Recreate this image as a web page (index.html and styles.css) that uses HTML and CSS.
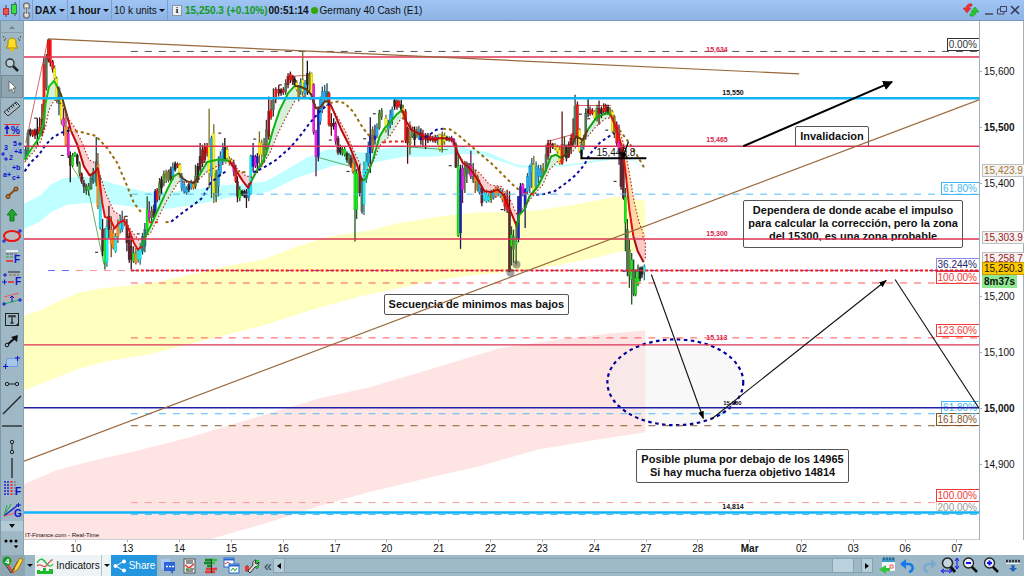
FILE: index.html
```html
<!DOCTYPE html>
<html lang="es">
<head>
    <meta charset="UTF-8">
    <meta name="viewport" content="width=device-width, initial-scale=1.0">
    <title>DAX - 1 hour</title>
    <link rel="stylesheet" href="styles.css">
</head>
<body>
    <header class="topbar">
        <button class="top-icon" aria-label="Chart style">
            <svg width="16" height="16" viewBox="0 0 16 16"><path d="M4 3v12M13 0v14" stroke="#444"/><rect x="1.500" y="6.500" width="5" height="6" fill="#f05050" stroke="#b33"/><rect x="9.500" y="2.500" width="5" height="9" fill="#3ddc3d" stroke="#285"/></svg>
        </button>
        <button class="top-icon link" aria-label="Link chart">
            <svg width="9" height="17" viewBox="0 0 9 17" fill="none" stroke="#777" stroke-width="1.500"><circle cx="4.500" cy="4" r="3" fill="#ddd"/><circle cx="4.500" cy="13" r="3" fill="#ddd"/><path d="M4.500 4v9" stroke="#eee" stroke-width="2.500"/><path d="M4.500 5v7"/></svg>
        </button>
        <label class="drop"><select class="strong" aria-label="Symbol"><option>DAX</option></select></label>
        <label class="drop"><select class="strong" aria-label="Timeframe"><option>1 hour</option></select></label>
        <label class="drop"><select aria-label="Units"><option>10 k units</option></select></label>
        <button class="info" aria-label="Information">i</button>
        <span class="quote">15,250.3 (+0.10%)</span>
        <span class="strong">00:51:14</span>
        <span class="dot"></span>
        <span class="market">Germany 40 Cash (E1)</span>
        <div class="window-buttons">
            <button aria-label="Refresh"><svg width="16" height="16" viewBox="0 0 16 16"><path d="M9 2C5 1 3 4 3 6H0l4 5 4-5H6c0-1 1-2 3-2z" fill="#e33" stroke="#b22" stroke-width=".5"/><path d="M7 14c4 1 6-2 6-4h3l-4-5-4 5h2c0 1-1 2-3 2z" fill="#2c2" stroke="#181" stroke-width=".5"/></svg></button>
            <button aria-label="Minimize"><svg width="10" height="12" viewBox="0 0 10 12"><path d="M1 10h8" stroke="#446" stroke-width="1.500"/></svg></button>
            <button aria-label="Restore"><svg width="10" height="12" viewBox="0 0 10 12" fill="none" stroke="#446"><rect x="3.500" y="2.500" width="6" height="5"/><path d="M3 5H.5v5H7V8"/></svg></button>
            <button aria-label="Close"><svg width="10" height="12" viewBox="0 0 10 12"><path d="M1 2l8 8M9 2l-8 8" stroke="#335" stroke-width="1.500"/></svg></button>
        </div>
    </header>

    <main class="workspace">
        <nav class="tools" aria-label="Drawing tools">
            <button class="scroll-up" aria-label="Scroll up"><svg width="6" height="4" viewBox="0 0 6 4"><path d="M0 4l3-3 3 3z" fill="#6d858f"/></svg></button>
            <button aria-label="Alert"><svg width="18" height="18" viewBox="0 0 18 18"><path d="M3 13c2-1 2-3 2-6 0-2 2-4 4-4s4 2 4 4c0 3 0 5 2 6z" fill="#ffdc28" stroke="#a80"/><circle cx="9" cy="14.500" r="2" fill="#f5b800"/><path d="M3 3L1 6M1 1L0 3M15 3l2 3M17 1l1 2" stroke="#555" fill="none"/></svg></button>
            <button aria-label="Zoom"><svg width="16" height="16" viewBox="0 0 16 16"><path d="M8 8l6 6" stroke="#222" stroke-width="2.500"/><circle cx="6" cy="6" r="4" fill="#b9ced9" stroke="#333" stroke-width="1.300"/></svg></button>
            <button class="active" aria-label="Pointer"><svg width="16" height="16" viewBox="0 0 16 16"><path d="M5 2v10l2.500-2 2 4 1.500-1-2-4h3z" fill="#fff" stroke="#555" stroke-width=".8"/></svg></button>
            <button aria-label="Ruler"><svg width="18" height="18" viewBox="0 0 18 18"><path d="M1 12L13 2l4 4L5 16z" fill="#a9bdc6" stroke="#333"/><path d="M4 10l2 2M6 8l1 2M8 6l2 2M10 4.500l1 2M12 3l2 2" stroke="#333"/></svg></button>
            <button aria-label="Percent change"><svg width="18" height="14" viewBox="0 0 18 14"><path d="M1 1.500h16M1 12.500h16" stroke="#e33"/><path d="M4 11V4M2 6l2-3 2 3" stroke="#11c" stroke-width="1.500" fill="none"/><text class="glyph" x="8" y="11">%</text></svg></button>
            <button aria-label="Elliott impulse"><svg width="22" height="20" viewBox="0 0 22 20"><path d="M2 18L5 7l4 7 6-11 3 6" stroke="#79a7ec" fill="none"/><path d="M0 13h4M2 11v4M17 3h4M19 1v4M3 18h4M5 16v4" stroke="#11c"/><text class="glyph small" x="3" y="9">3</text><text class="glyph small" x="12" y="5">5</text><text class="glyph small" x="8" y="19">2</text><text class="glyph small" x="13" y="13">+4</text></svg></button>
            <button aria-label="Elliott correction"><svg width="20" height="18" viewBox="0 0 20 18"><path d="M2 2l5 12 5-10 5 11" stroke="#79a7ec" fill="none"/><text class="glyph small" x="10" y="7">+b</text><text class="glyph small" x="1" y="14">a+</text><text class="glyph small" x="10" y="17">c+</text></svg></button>
            <button aria-label="Segment"><svg width="16" height="16" viewBox="0 0 16 16"><path d="M4 11l8-7" stroke="#8a4b14" stroke-width="2"/><circle cx="4" cy="11.500" r="2" fill="#c87a35" stroke="#613208"/><circle cx="12" cy="4" r="2" fill="#c87a35" stroke="#613208"/></svg></button>
            <button aria-label="Up marker"><svg width="14" height="16" viewBox="0 0 14 16"><path d="M7 2l5 6H9v6H5V8H2z" fill="#20a62a" stroke="#137a1c"/></svg></button>
            <button aria-label="Ellipse"><svg width="20" height="16" viewBox="0 0 20 16"><ellipse cx="10" cy="8" rx="8" ry="5" fill="#bbb" stroke="#e11" stroke-width="2"/><path d="M0 13h4M2 11v4M16 3h4M18 1v4" stroke="#11c"/></svg></button>
            <button aria-label="Fibonacci retracement"><svg width="18" height="16" viewBox="0 0 18 16"><path d="M3 2h12" stroke="#eee" stroke-width="2"/><path d="M3 5h12" stroke="#555" stroke-dasharray="3 1"/><path d="M3 8h9" stroke="#393" stroke-dasharray="3 1"/><path d="M3 12h7" stroke="#e22" stroke-width="1.500"/><text class="glyph" x="11" y="14">F</text></svg></button>
            <button aria-label="Fibonacci extension"><svg width="20" height="16" viewBox="0 0 20 16"><path d="M6 2h12" stroke="#555" stroke-width="1.500"/><path d="M7 5h10" stroke="#a63" stroke-dasharray="3 1"/><path d="M6 12h6" stroke="#e22" stroke-width="1.500"/><path d="M0 12h5M2.500 9.500v5M3 3v4M1 5h4" stroke="#11c"/><text class="glyph" x="13" y="15">F</text></svg></button>
            <button aria-label="Channel"><svg width="20" height="16" viewBox="0 0 20 16"><path d="M2 6l15-4" stroke="#e55"/><path d="M2 9l15-4" stroke="#e97"/><path d="M2 13l15-4" stroke="#2a5"/><path d="M0 13h4M2 11v4M16 9h4M18 7v4M10 5v6M8 7l2-2 2 2" stroke="#11c" fill="none"/></svg></button>
            <button aria-label="Text"><svg width="16" height="16" viewBox="0 0 16 16"><rect x="1.500" y="1.500" width="13" height="12" fill="none" stroke="#222"/><path d="M5 5.500V4h6v1.500M8 4v7M6.500 11h3" stroke="#222" stroke-width="1.300" fill="none"/><path d="M11 14l4-4v4z" fill="#222"/></svg></button>
            <button aria-label="Arrow"><svg width="16" height="16" viewBox="0 0 16 16"><path d="M3 12l8-7" stroke="#111" stroke-width="2"/><path d="M14 2l-1 7-6-5z" fill="#111"/><circle cx="3" cy="12" r="1.800" fill="#9db7c4" stroke="#111"/></svg></button>
            <button aria-label="Rectangle"><svg width="18" height="14" viewBox="0 0 18 14"><rect x="3.500" y="3.500" width="11" height="8" fill="#a7c5e5" stroke="#6b9bf0"/><path d="M0 11.500h5M2.500 9v5M12 3h5M14.500 1v5" stroke="#11c"/></svg></button>
            <button aria-label="Horizontal segment"><svg width="16" height="8" viewBox="0 0 16 8" fill="none" stroke="#222"><path d="M4 4h8"/><circle cx="3" cy="4" r="1.700"/><circle cx="13" cy="4" r="1.700"/></svg></button>
            <button aria-label="Trend line"><svg width="20" height="20" viewBox="0 0 20 20"><path d="M1 19L19 1" stroke="#222" stroke-width="1.300"/></svg></button>
            <button aria-label="Horizontal line"><svg width="20" height="4" viewBox="0 0 20 4"><path d="M0 2h20" stroke="#222" stroke-width="1.300"/></svg></button>
            <button aria-label="Vertical segment"><svg width="8" height="16" viewBox="0 0 8 16" fill="none" stroke="#222"><path d="M4 4v8"/><circle cx="4" cy="3" r="1.700"/><circle cx="4" cy="13" r="1.700"/></svg></button>
            <button aria-label="Vertical line"><svg width="4" height="20" viewBox="0 0 4 20"><path d="M2 0v20" stroke="#222" stroke-width="1.300"/></svg></button>
            <button aria-label="Fibonacci time"><svg width="20" height="18" viewBox="0 0 20 18"><path d="M3 1v15M6 1v15" stroke="#4549c9" stroke-width="2" stroke-dasharray="2 1"/><path d="M9.500 1v15" stroke="#e33" stroke-width="2" stroke-dasharray="2 1"/><path d="M13 1v15" stroke="#667" stroke-dasharray="2 1"/><text class="glyph" x="13" y="15">F</text></svg></button>
            <button aria-label="Gann fan"><svg width="20" height="16" viewBox="0 0 20 16"><path d="M2 14L5 3M2 14L9 2" stroke="#2a4"/><path d="M2 14L16 3" stroke="#22c" stroke-width="1.500"/><path d="M2 14l12-3" stroke="#e55"/><path d="M14 3h5M16.500 1v4" stroke="#11c"/><text class="glyph" x="12" y="15">G</text></svg></button>
            <button class="scroll-down" aria-label="Scroll down"><svg width="6" height="4" viewBox="0 0 6 4"><path d="M0 0h6L3 4z" fill="#111"/></svg></button>
            <button class="more" aria-label="More tools"><svg width="18" height="14" viewBox="0 0 18 14"><circle cx="3" cy="5" r="1.500"/><circle cx="8" cy="5" r="1.500"/><circle cx="13" cy="5" r="1.500"/><path d="M10 9h6l-3 4z" stroke="#fff" stroke-width=".5"/></svg></button>
        </nav>

        <section class="chart">
            <div class="plot">
                <p class="note secuencia">Secuencia de minimos mas bajos</p>
                <p class="note invalidacion">Invalidacion</p>
                <p class="note dependera"><span>Dependera de donde acabe el impulso<br>para calcular la corrección, pero la zona<br>del 15300, es una zona probable</span></p>
                <p class="note posible">Posible pluma por debajo de los 14965<br>Si hay mucha fuerza objetivo 14814</p>

                <span class="fib fib-0">0.00%</span>
                <span class="fib fib-618 sky">61.80%</span>
                <span class="fib fib-100 red">100.00%</span>
                <span class="fib fib-382 blue">36.244%</span>
                <span class="fib fib-1236 red">123.60%</span>
                <span class="fib fib-618b sky">61.80%</span>
                <span class="fib fib-1618 brown">161.80%</span>
                <span class="fib fib-200 grey">200.00%</span>
                <span class="fib fib-100b red">100.00%</span>

                <svg class="drawing" viewBox="24 21 956 519" preserveAspectRatio="none">
                    <defs>
                        <marker id="head" viewBox="0 0 8 8" refX="7" refY="4" markerWidth="8" markerHeight="8" markerUnits="userSpaceOnUse" orient="auto"><path d="M0 1l8 3-8 3z"/></marker>
                        <marker id="bighead" viewBox="0 0 10 10" refX="9" refY="5" markerWidth="10" markerHeight="10" markerUnits="userSpaceOnUse" orient="auto"><path d="M0 0l10 5-10 5z"/></marker>
                    </defs>

                    <path fill="#ffffbf" d="M24 316L40 311 58 302 77 294 100 289 130 286 160 282 200 273 230 266 263 260 297 247 330 237 370 231 397 224 440 217 473 213 517 212 543 210 580 204 617 197 646 201V253L620 252 597 258 563 265 517 272 470 276 430 282 360 297 310 311 260 327 200 342 150 355 107 362 77 370 45 383 24 391z"/>
                    <path fill="#ffe4e4" d="M24 485L57 471 90 462 135 452 190 438 230 426 270 414 320 399 370 388 424 372 500 349 560 340 610 334 646 331V433L600 440 540 450 480 467 424 480 370 493 320 507 270 523 211 540H24z"/>
                    <g id="series"></g>

                    <ellipse cx="676" cy="383" rx="68" ry="43" fill="#eee" fill-opacity=".4" stroke="#000099" stroke-width="2.200" stroke-dasharray="3.500 3.500"/>

                    <g class="level crimson">
                        <path d="M24 57H980M24 146.500H980M24 239.500H980M24 345.500H980"/>
                    </g>
                    <path class="level navy" d="M24 408.500H980"/>
                    <path class="level cyan" d="M24 98.500H980M24 513.500H980"/>
                    <g class="level dashed">
                        <path stroke="#555" d="M131 51.500H980"/>
                        <path stroke="#4dbdf5" d="M131 194.500H980M131 414.500H980M131 515.500H980"/>
                        <path stroke="#f55" d="M131 283.500H980M131 338.500H980"/>
                        <path stroke="#f99" d="M131 503.500H938"/>
                        <path stroke="#8b5a2b" d="M131 426.500H980"/>
                        <path stroke="#66f" d="M48 271H980"/>
                    </g>
                    <path stroke="#f99" stroke-dasharray="7 7" d="M76 271H131"/>
                    <path stroke="#f01818" stroke-width="1.800" stroke-dasharray="3 2" d="M131 271H980"/>

                    <g stroke="#99683a" stroke-width="1.200">
                        <path d="M48 39L800 74M24 462L980 100"/>
                    </g>
                    <g stroke="#111" stroke-width="1.100" fill="none">
                        <path marker-end="url(#head)" d="M652 275L704 419"/>
                        <path marker-end="url(#head)" d="M712 420L887 281"/>
                        <path d="M896 280L980 409"/>
                    </g>
                    <path marker-end="url(#bighead)" stroke="#000" stroke-width="2" d="M744 146.500L893 82"/>
                    <path fill="none" stroke="#000" stroke-width="2" d="M582 150V158.500H647"/>
                    <path stroke="#000" stroke-width="1.200" d="M629 142L624 156M619 152l9 5"/>
                    <circle cx="624" cy="155" r="2.500"/>
                    <g fill="#444" fill-opacity=".5"><circle cx="511" cy="273" r="4"/><circle cx="517" cy="265" r="4"/></g>
                </svg>

                <span class="tag tag-634 crimson-text">15,634</span>
                <span class="tag tag-550">15,550</span>
                <span class="tag tag-465 crimson-text">15,465</span>
                <span class="tag tag-300 crimson-text">15,300</span>
                <span class="tag tag-113 crimson-text">15,113</span>
                <span class="tag tag-000">15,000</span>
                <span class="tag tag-814">14,814</span>
                <span class="measure">15,440.8</span>
                <span class="credit">IT-Finance.com - Real-Time</span>
            </div>

            <div class="price-axis">
                <span>15,600</span>
                <span class="strong">15,500</span>
                <span>15,400</span>
                <span></span>
                <span>15,200</span>
                <span>15,100</span>
                <span class="strong">15,000</span>
                <span>14,900</span>
                <b class="price price-423">15,423.9</b>
                <b class="price price-303">15,303.9</b>
                <b class="price price-258">15,258.7</b>
                <b class="price price-last">15,250.3</b>
                <b class="price price-time">8m37s</b>
            </div>

            <div class="time-axis">
                <span>10</span><span>13</span><span>14</span><span>15</span><span>16</span><span>17</span>
                <span>20</span><span>21</span><span>22</span><span>23</span><span>24</span><span>27</span>
                <span>28</span><span class="strong">Mar</span><span>02</span><span>03</span><span>06</span><span>07</span>
            </div>
        </section>
    </main>

    <footer class="bottombar">
        <button class="objects" aria-label="Drawn objects"><svg width="22" height="20" viewBox="0 0 22 20"><path d="M3 8l6 9 7-12" stroke="#333" fill="none"/><path d="M6 9l5 8" stroke="#e33" stroke-width="1.500"/><path d="M11 17l2-6 5-9 3 2-5 9z" fill="#ffd84a" stroke="#a70"/><circle cx="5" cy="5" r="4.500" fill="#1b9a2c"/><text class="count" x="3" y="8">4</text></svg></button>
        <button class="caret" aria-label="Objects menu"></button>
        <button class="indicators"><svg width="18" height="18" viewBox="0 0 18 18"><path d="M1 6c4-6 6-4 9 0s5 4 7 1" stroke="#2b3" fill="none" stroke-width="1.300"/><path d="M1 9c4-4 6 3 9 0s5-7 7-6" stroke="#d55" fill="none" stroke-width="1.300"/><path d="M1 17v-4h3v1h3v-3h3v3h3v-2h4v5z" fill="#1dbb2b"/></svg>Indicators</button>
        <button class="caret light" aria-label="Indicators menu"></button>
        <button class="share"><svg width="13" height="14" viewBox="0 0 13 14" fill="#fff"><path d="M11 2L3 7l8 5" stroke="#fff" fill="none"/><circle cx="11" cy="2.500" r="2"/><circle cx="2.500" cy="7" r="2"/><circle cx="11" cy="11.500" r="2"/></svg>Share</button>
        <button class="tool" aria-label="Chat"><svg width="17" height="17" viewBox="0 0 17 17"><path d="M1 2h9v9H4l-3 2z" fill="#a8c9f4"/><path d="M4 5h11v9h-2v3l-3-3H4z" fill="#2d65d8"/><path d="M6 9.500h2M9 9.500h2M12 9.500h2" stroke="#fff" stroke-width="1.500"/></svg></button>
        <button class="tool" aria-label="News"><svg width="14" height="16" viewBox="0 0 14 16"><rect x="1" y="1" width="11" height="14" fill="#eee" stroke="#555"/><path d="M3 3h7M3 5h7M3 13h7M7 11h4" stroke="#333"/><path d="M2 7l4 3 5-4" stroke="#e33" fill="none" stroke-width="1.500"/><path d="M3 11l3 1" stroke="#2a3" stroke-width="2"/></svg></button>
        <button class="tool" aria-label="Order book"><svg width="16" height="16" viewBox="0 0 16 16"><path d="M2 2h7M1 5h8M4 8h5" stroke="#118a22" stroke-width="2.500"/><path d="M9 2h5M9 5h3" stroke="#31c444" stroke-width="2.500"/><path d="M3 11h11M2 14h10" stroke="#e63b3b" stroke-width="2.500"/><path d="M8.500 1v14" stroke="#333"/></svg></button>
        <button class="tool" aria-label="Windows"><svg width="17" height="17" viewBox="0 0 17 17" fill="#fff" stroke="#2865d0"><rect x="1" y="1" width="10" height="9"/><path d="M1 2.500h10" stroke-width="2"/><path d="M2 7l3-2 3 3" stroke="#e33"/><rect x="6" y="7" width="10" height="9"/><path d="M6 8.500h10" stroke-width="2"/><path d="M8 14l2-3 2 3 2-3" stroke="#2a3" fill="none"/></svg></button>
        <button class="tool" aria-label="Settings"><svg width="17" height="17" viewBox="0 0 17 17"><path d="M3 8v7M13 3v9" stroke="#333"/><rect x="1" y="9" width="4" height="5" fill="#e33"/><rect x="11" y="3" width="4" height="8" fill="#2c3"/><path d="M4 14l5-6c-1-3 1-5 3-5l-1 3 2 1 2-2c0 3-2 5-4 5l-5 6z" fill="#ddd" stroke="#333"/></svg></button>
        <button class="collapse" aria-label="Collapse">«</button>
        <button class="scroll-button" aria-label="Scroll left"><svg width="4" height="6" viewBox="0 0 4 6"><path d="M4 0v6L0 3z"/></svg></button>
        <div class="track"><div class="thumb"></div></div>
        <button class="scroll-button" aria-label="Scroll right"><svg width="4" height="6" viewBox="0 0 4 6"><path d="M0 0v6l4-3z"/></svg></button>
        <div class="zooming">
            <button class="tool" aria-label="Go to date"><svg width="18" height="17" viewBox="0 0 18 17"><rect x="4" y="3" width="13" height="11" fill="#f5f5f5"/><path d="M4 3h13" stroke="#3c9ac5" stroke-width="4"/><path d="M6 0v3M9 0v3M12 0v3M15 0v3" stroke="#246"/><path d="M12 8h3v3h-3z" fill="none" stroke="#e66"/><path d="M8 8v3h4v3H8v3l-7-4.500z" fill="#35c637"/></svg></button>
            <button class="tool" aria-label="Undo"><svg width="16" height="14" viewBox="0 0 16 14"><path d="M3 5h5c6 0 6 7 1 8" stroke="#1479e8" stroke-width="2.500" fill="none"/><path d="M6 0v10L0 5z" fill="#1479e8"/></svg></button>
            <button class="tool" aria-label="Redo"><svg width="16" height="14" viewBox="0 0 16 14"><path d="M13 5H8c-6 0-6 7-1 8" stroke="#78a9cc" stroke-width="2.500" fill="none"/><path d="M10 0v10l6-5z" fill="#78a9cc"/></svg></button>
            <button class="tool" aria-label="Fit"><svg width="18" height="17" viewBox="0 0 18 17"><path d="M9 9l5 6" stroke="#111" stroke-width="3"/><circle cx="6.500" cy="6" r="5" fill="#c5d5dc" stroke="#222" stroke-width="1.500"/><path d="M16 2v9M14 4l2-3 2 3M14 9l2 3 2-3M1 14h9M3 12l-3 2 3 2M8 12l3 2-3 2" stroke="#11e" fill="none"/></svg></button>
            <button class="tool" aria-label="Zoom out"><svg width="17" height="17" viewBox="0 0 17 17"><path d="M9 9l6 6" stroke="#111" stroke-width="2.500"/><circle cx="6.500" cy="6" r="5" fill="#e8f0f5" stroke="#222" stroke-width="1.300"/><path d="M4 6h5" stroke="#11e" stroke-width="2"/></svg></button>
            <button class="tool" aria-label="Zoom in"><svg width="17" height="17" viewBox="0 0 17 17"><path d="M9 9l6 6" stroke="#111" stroke-width="2.500"/><circle cx="6.500" cy="6" r="5" fill="#e8f0f5" stroke="#222" stroke-width="1.300"/><path d="M4 6h5M6.500 3.500v5" stroke="#11e" stroke-width="2"/></svg></button>
            <button class="tool" aria-label="Keyboard"><svg width="16" height="14" viewBox="0 0 16 14"><path d="M1 2h14" stroke="#333" stroke-width="2.500" stroke-dasharray="2 1"/><path d="M1 4.500h14" stroke="#eee"/><path d="M6.500 6h3v3H12l-4 4-4-4h2.500z" fill="#2463b8"/></svg></button>
        </div>
    </footer>

    <script src="chart.js"></script>
</body>
</html>
```

FILE: styles.css
```css
* {
    box-sizing: border-box;
}

body {
    margin: 0;
    height: 100vh;
    display: flex;
    flex-direction: column;
    font-family: "Liberation Sans", Arial, sans-serif;
    font-size: 10px;
    color: #111;
    background-color: #fff;
}

button,
select {
    font: inherit;
    color: inherit;
    background: none;
    border: 0;
    padding: 0;
    margin: 0;
    cursor: pointer;
}

button {
    display: flex;
    align-items: center;
    justify-content: center;
}

svg {
    display: block;
    flex: none;
}

.strong,
select.strong {
    font-weight: bold;
}

/* top bar */
.topbar {
    display: flex;
    align-items: center;
    height: 21px;
    flex: none;
    background: linear-gradient(#9fc5f5, #8db4e4);
    border-bottom: 1px solid #7898c0;
    white-space: nowrap;
}

.top-icon {
    width: 20px;
    height: 20px;
    border-right: 1px solid #7a9fcf;
}

.top-icon.link {
    width: 13px;
}

.drop {
    display: flex;
    align-items: center;
    gap: 2px;
    height: 20px;
    padding: 0 2px;
    border-right: 1px solid #7a9fcf;
}

.drop select {
    appearance: none;
}

.drop::after,
.caret::after {
    content: "";
    border: 3px solid transparent;
    border-top-color: #111;
    border-bottom: 0;
}

.info {
    width: 10px;
    height: 11px;
    margin: 0 3px 0 4px;
    background-color: #e9eff5;
    border: 1px solid #8898a8;
    font-family: "Liberation Serif", serif;
    font-weight: bold;
    font-size: 9px;
}

.quote {
    color: #119a22;
    font-weight: bold;
}

.quote + .strong {
    margin-left: 1px;
}

.dot {
    width: 7px;
    height: 7px;
    margin: 0 2px;
    border-radius: 50%;
    background-color: #35a500;
}

.window-buttons {
    display: flex;
    align-items: center;
    gap: 3px;
    height: 20px;
    margin-left: auto;
    padding-right: 4px;
}

.window-buttons button:first-child {
    margin-right: 2px;
}

/* left toolbar */
.workspace {
    display: flex;
    flex: 1;
    min-height: 0;
}

.tools {
    display: flex;
    flex-direction: column;
    width: 24px;
    flex: none;
    background-color: #9eb8c5;
    border-right: 1px solid #8ba3af;
    border-left: 1px solid #7f98a5;
}

.tools button {
    flex: 1 1 0;
    min-height: 0;
}

.tools .active {
    background-color: #8fa6b1;
    border: 1px solid #768d99;
}

.tools .scroll-up {
    flex: 0 0 12px;
    border-bottom: 1px solid #879faa;
}

.tools .scroll-down {
    flex: 0 0 10px;
    background-color: #b4cad5;
}

.tools .more {
    flex: 0 0 24px;
}

.glyph {
    font-size: 10px;
    font-weight: bold;
    fill: #1111cc;
}

.glyph.small {
    font-size: 7px;
}

.count {
    font-size: 8px;
    font-weight: bold;
    fill: #fff;
}

/* chart */
.chart {
    display: grid;
    grid-template-columns: 1fr 44px;
    grid-template-rows: 1fr 15px;
    flex: 1;
    min-width: 0;
}

.plot {
    position: relative;
    overflow: hidden;
    border-right: 1px solid #9fb0b8;
    border-bottom: 1px solid #c8ced2;
}

.drawing {
    position: absolute;
    top: 0;
    left: 0;
    width: 100%;
    height: 100%;
}

.level {
    fill: none;
}

.crimson {
    stroke: #dc3455;
    stroke-width: 1.5;
}

.navy {
    stroke: #2020a8;
    stroke-width: 1.4;
}

.cyan {
    stroke: #10b4f8;
    stroke-width: 2.5;
}

.dashed {
    stroke-dasharray: 7 7;
}

.note {
    position: absolute;
    margin: 0;
    padding: 3px 4px;
    border: 1px solid #555;
    border-radius: 2px;
    background-color: #fff;
    font-size: 11px;
    font-weight: bold;
    line-height: 13px;
    text-align: center;
    white-space: nowrap;
}

.secuencia {
    left: calc(100% * 360 / 956);
    top: calc(100% * 274 / 519);
}

.invalidacion {
    left: calc(100% * 772 / 956);
    top: calc(100% * 105 / 519);
}

.dependera {
    left: calc(100% * 720 / 956);
    top: calc(100% * 179 / 519);
    padding-bottom: 6px;
}

.dependera span {
    display: block;
    height: 37px;
    overflow: hidden;
}

.posible {
    left: calc(100% * 613 / 956);
    top: calc(100% * 429 / 519);
}

.fib {
    position: absolute;
    right: 0;
    height: 13px;
    padding: 0 2px 0 1px;
    border: 1px solid currentColor;
    border-right: 0;
    background-color: #fff;
    line-height: 12px;
    color: #333;
}

.fib.sky { color: #45b8f0; }
.fib.red { color: #f23838; }
.fib.blue { color: #24246e; border-color: #8888e8; }
.fib.brown { color: #84542a; }
.fib.grey { color: #999; border-color: #ddd; }

.fib-0 { top: calc(100% * 17 / 519); }
.fib-618 { top: calc(100% * 161 / 519); }
.fib-382 { top: calc(100% * 237 / 519); }
.fib-100 { top: calc(100% * 250 / 519); }
.fib-1236 { top: calc(100% * 304 / 519); }
.fib-618b { top: calc(100% * 381 / 519); }
.fib-1618 { top: calc(100% * 393 / 519); }
.fib-100b { top: calc(100% * 469 / 519); }
.fib-200 { top: calc(100% * 481 / 519); }

.tag {
    position: absolute;
    font-size: 7px;
    line-height: 8px;
    font-weight: bold;
}

.crimson-text {
    color: #dc2448;
}

.tag-634 { left: calc(100% * 683 / 956); top: calc(100% * 25 / 519); }
.tag-550 { left: calc(100% * 699 / 956); top: calc(100% * 68 / 519); }
.tag-465 { left: calc(100% * 683 / 956); top: calc(100% * 115 / 519); }
.tag-300 { left: calc(100% * 683 / 956); top: calc(100% * 209 / 519); }
.tag-113 { left: calc(100% * 683 / 956); top: calc(100% * 314 / 519); }
.tag-000 { left: calc(100% * 700 / 956); top: calc(100% * 379 / 519); font-size: 6px; }
.tag-814 { left: calc(100% * 699 / 956); top: calc(100% * 483 / 519); }

.measure {
    position: absolute;
    left: calc(100% * 573 / 956);
    top: calc(100% * 126 / 519);
}

.credit {
    position: absolute;
    left: 1px;
    bottom: 0;
    font-size: 6px;
    line-height: 7px;
}

.price-axis {
    position: relative;
    display: flex;
    flex-direction: column;
    padding: 22px 0 47px;
    border-right: 1px solid #9fb0b8;
}

.price-axis span {
    display: flex;
    align-items: center;
    flex: 1;
}

.price-axis span:not(:empty)::before {
    content: "";
    width: 2px;
    margin-right: 2px;
    border-top: 1px solid #9fb0b8;
}

.price {
    position: absolute;
    left: 2px;
    height: 13px;
    padding: 0 1px;
    border: 1px solid #c0c0c0;
    background-color: #f3f3f3;
    font-weight: normal;
    line-height: 11px;
    color: #a02020;
}

.price-423 { top: calc(100% * 143 / 519); color: #a87a30; }
.price-303 { top: calc(100% * 210 / 519); }
.price-258 { top: calc(100% * 231 / 519); }

.price-last {
    top: calc(100% * 241 / 519);
    border-color: #c89800;
    background-color: #ffc800;
    color: #111;
}

.price-time {
    top: calc(100% * 254 / 519);
    border-color: #8fe890;
    background-color: #8fe890;
    font-weight: bold;
    color: #111;
}

.time-axis {
    grid-column: 1 / 3;
    display: flex;
    padding: 0 41px 0 26px;
}

.time-axis span {
    flex: 1 1 0;
    line-height: 13px;
    text-align: center;
}

.time-axis span::before {
    content: "";
    display: block;
    width: 1px;
    height: 2px;
    margin: 0 auto;
    background-color: #9fb0b8;
}

/* bottom bar */
.bottombar {
    display: flex;
    height: 21px;
    flex: none;
    background-color: #9cb8c6;
    white-space: nowrap;
}

.objects {
    width: 25px;
    background-color: #8da6b1;
}

.caret {
    width: 10px;
}

.caret.light,
.indicators {
    background-color: #eef3f5;
}

.indicators {
    gap: 2px;
    width: 66px;
}

.caret.light {
    border-left: 1px solid #b4c2ca;
}

.share {
    gap: 3px;
    width: 46px;
    background-color: #2496e0;
    color: #fff;
}

.tool {
    width: 21px;
}

.share + .tool {
    margin-left: 1px;
}

.collapse {
    width: 10px;
    font-size: 14px;
    color: #334;
}

.scroll-button {
    width: 12px;
    height: 15px;
    align-self: center;
    background-color: #b5cdd8;
    border: 1px solid #88a2ae;
}

.track {
    display: flex;
    flex: 1;
    height: 15px;
    align-self: center;
    border: solid #88a2ae;
    border-width: 1px 0;
    background-color: #9fbac7;
}

.thumb {
    width: 22px;
    margin: 0 7px 0 auto;
    background-color: #b9d2dd;
    border: solid #88a2ae;
    border-width: 0 1px;
}

.zooming {
    display: flex;
    padding: 0 1px 0 3px;
}
```

FILE: chart.js
```js
// Series are stored in thirds of a chart unit, in three blocks of days.
var NS = "http://www.w3.org/2000/svg";
var series = document.getElementById("series");

function add(name, attrs) {
    var el = document.createElementNS(NS, name);
    for (var key in attrs) {
        el.setAttribute(key, attrs[key]);
    }
    series.appendChild(el);
}

function points(text, shift) {
    return text.split(" ").map(function (pair) {
        var p = pair.split(",");
        return [24 + (Number(p[0]) + shift) / 3, 30 + Number(p[1]) / 3];
    });
}

function line(pts, stroke, width, dash) {
    var attrs = { points: pts.join(" "), fill: "none", stroke: stroke, "stroke-width": width, "stroke-linejoin": "round" };
    if (dash) {
        attrs["stroke-dasharray"] = dash;
    }
    add("polyline", attrs);
}

var A = 0, B = 618, C = 1218;

// cyan band
var bandTop = points("0,522 50,497 80,465 120,445 165,440 215,445 270,462 330,478 370,487 430,488 510,480 570,470", A)
    .concat(points("0,465 60,462 110,455 170,420 230,385 290,360 340,358 400,370 450,358 500,352", B))
    .concat(points("20,350 70,350 100,352 180,370 260,404 320,410 400,405 450,400 530,385 570,380 610,390 648,415", C));
var bandBottom = points("0,598 50,575 80,548 130,525 190,520 270,524 340,533 400,540 450,535 510,525 570,514", A)
    .concat(points("0,503 70,497 120,485 200,445 260,425 310,408 350,405 390,410 450,395 520,382", B))
    .concat(points("20,380 80,372 150,375 200,390 270,413 400,411 480,400 570,386 610,393 648,418", C));
add("polygon", { points: bandTop.concat(bandBottom.reverse()).join(" "), fill: "#bfffff" });

// fast average and its dotted signal: shift, colour, fill, average, signal
var averages = [
    [A, "#10c010", "#d5f0d8", "2,390 20,360 45,325 58,280 65,220 75,170 90,153 100,170", "2,397 30,365 50,335 65,290 75,240 90,212 100,212"],
    [A, "#5a3a14", "#f5dcd4", "100,170 115,205 130,260", "100,212 115,225 130,262"],
    [A, "#b80c0c", "#ffd0d0", "130,260 140,300 160,345 180,410 197,437 210,430 222,415", "130,262 150,290 175,340 195,390 215,400 222,415"],
    [A, "#e01010", "#ffd0d0", "222,415 228,460 235,520 243,562 260,570 272,597 285,580 300,572 315,600 330,640 342,660 355,650", "222,415 245,490 270,545 300,565 320,600 345,632 355,628"],
    [A, "#10b010", "#d5f0d8", "355,650 365,620 380,590 400,545 430,480 450,440 465,430", "355,628 380,610 400,570 430,510 465,455"],
    [A, "#5a3a14", "#eee0d0", "465,430 475,445 490,455 510,460 525,440", "465,455 490,458 520,455"],
    [A, "#10b010", "#d5f0d8", "525,440 550,397 580,390 600,390 618,395", "525,450 550,425 580,410 618,395"],
    [B, "#b80c0c", "#ffd0d0", "0,395 20,425 40,455 55,475 65,455", "0,390 25,420 50,440 65,440"],
    [B, "#10b010", "#d5f0d8", "65,455 80,425 100,395 110,370 130,300 150,240 175,190 195,168", "65,445 95,410 120,370 145,310 170,260 200,205"],
    [B, "#5a3a14", "#e2f0dd", "195,168 210,170 230,178 245,195 258,235 270,235 285,215 298,215", "200,205 220,200 245,210 265,235 298,225"],
    [B, "#b80c0c", "#ffd0d0", "298,215 310,240 335,300 360,350 380,400 398,455", "298,225 320,255 350,310 375,370 395,410"],
    [B, "#10b010", "#d5f0d8", "398,455 410,445 430,390 450,320 465,295 480,280 500,255 518,240", "398,450 410,425 430,395 455,340 480,320 515,265"],
    [B, "#b80c0c", "#ffd0d0", "518,240 530,275 545,300 565,310 580,320 600,328 625,330", "518,265 540,285 565,305 600,320 625,325"],
    [C, "#b80c0c", "#ffd0d0", "20,326 40,325 70,330 85,370 100,400 120,415 145,450 165,485 185,487 205,480 225,500 245,550 262,590", "20,325 70,330 90,385 120,405 150,430 180,465 215,470 240,505 262,555"],
    [C, "#10a010", "#d5f0d8", "262,590 270,555 285,540 300,500 325,470 350,420 365,380 380,375 395,385", "262,555 285,530 310,500 340,465 360,420 385,395"],
    [C, "#5a3a14", "#d5f0d8", "395,385 415,370 440,320 460,330 475,300", "390,395 415,385 445,345 475,320"],
    [C, "#10a010", "#d5f0d8", "475,300 500,265 530,250 545,255", "475,320 500,290 530,265 550,265"],
    [C, "#e01010", "#ffd9a6", "545,255 565,310 580,360 590,440 600,540 612,620", "550,265 570,300 585,350 600,430 615,520 630,580 645,620"],
    [C, "#a01010", "#ffc8c8", "612,620 625,665 643,698", "640,620 648,640 648,690"]
];

averages.forEach(function (a) {
    add("polygon", { points: points(a[3], a[0]).concat(points(a[4], a[0]).reverse()).join(" "), fill: a[2] });
});

// slow dashed average
var slow = [
    [A, "n", "2,425 20,398 45,375 65,345 90,320 115,308 135,303"],
    [A, "y", "135,303 155,303 215,318 250,355 280,400 310,470 330,520 355,552"],
    [A, "r", "375,578 410,578"],
    [A, "y", "425,578 442,576"],
    [A, "n", "442,576 475,550 510,525 535,505 560,460 590,435 612,422"],
    [B, "y", "20,425 50,428"],
    [B, "n", "70,428 100,415 140,390 180,355 210,320 240,280 270,245 300,220"],
    [B, "y", "300,220 325,215 345,220 370,245 400,295 420,320 440,338"],
    [B, "r", "460,338 475,336 500,335 530,335"],
    [B, "n", "570,330 600,315 620,300 640,297"],
    [C, "y", "40,297 60,298 85,315 120,345 155,375 190,405 220,435 250,465 268,480"],
    [C, "r", "285,490 320,495"],
    [C, "n", "320,495 345,493 375,485 410,460 440,435 465,405 480,375 510,340 535,322 555,310"],
    [C, "y", "570,300 600,340 625,380 648,420"]
];
var slowColors = { n: "#0c0c9c", y: "#9a6a0a", r: "#e82020" };

// zigzag links between extremes
[[A, "5,340 72,28"], [B, "175,140 245,135"], [C, "355,335 437,312 440,227 545,227"]].forEach(function (z) {
    line(points(z[1], z[0]), "#c84040", 0.8);
});
[[A, "145,412 195,488 240,705"], [B, "262,382 370,412"], [B, "541,352 655,360"]].forEach(function (z) {
    line(points(z[1], z[0]), "#3b9a3b", 0.8);
});

var colors = {
    k: "#2a2622", r: "#fa1414", R: "#a01418", g: "#14f014", G: "#5c8c40", y: "#fcf410", m: "#f818e8",
    c: "#18f0f8", b: "#20acf0", n: "#2020b8", o: "#ff8c14", p: "#602430", t: "#257880", d: "#56745a", v: "#8c8420"
};
var wicks = {
    k: "#111", r: "#601010", R: "#501010", g: "#185818", G: "#30481c", y: "#76701c", m: "#5c1458",
    c: "#207880", b: "#285870", n: "#181858", o: "#80481c", p: "#301018", t: "#184850", d: "#303c30", v: "#5c5818"
};

// candles: x, wick top, body top, body bottom, wick bottom, colour
var candles = [
    [A, "5 352 360 388 392 t|12 300 310 372 378 d|19 296 300 314 320 k|26 300 303 316 322 r|33 296 300 318 328 R|40 265 300 315 345 k|47 262 292 312 322 r|54 222 268 310 318 R|60 85 105 268 300 r|67 72 82 175 182 d|73 27 30 88 98 r|79 27 30 98 110 r|86 90 95 118 128 r|92 106 115 145 150 y|98 140 145 210 220 y|105 170 175 222 256 t|112 190 205 270 285 y|119 235 265 290 318 m|126 250 290 345 350 o|133 290 310 378 385 m|139 365 378 408 458 p|146 370 378 408 412 g|153 366 370 378 382 g|160 372 376 402 410 k|167 395 402 432 440 G|173 428 432 455 462 R|180 450 460 470 490 p|187 462 468 482 495 d|194 460 470 482 498 g|201 432 445 478 480 d|208 415 428 458 462 t|217 322 395 458 470 t|222 370 405 530 538 o|229 440 480 595 600 c|236 568 598 665 680 p|243 595 630 700 720 g|249 570 590 700 712 c|255 528 560 600 625 p|262 560 600 645 683 o|268 595 610 655 660 o|275 610 620 665 670 c|282 570 590 620 640 o|289 555 578 600 612 c|295 543 570 600 608 b|302 560 575 585 590 o|309 568 590 640 665 p|316 610 620 690 700 p|322 620 650 690 720 p|329 650 670 695 700 g|336 655 672 700 705 o|343 660 665 690 700 c|349 640 650 690 706 c|356 610 620 665 675 t|363 580 600 650 668 t|370 500 540 600 615 g|376 515 545 565 575 m|383 530 545 565 575 G|390 525 540 560 565 p|394 478 485 545 550 n|400 475 483 510 518 r|407 445 460 500 512 G|413 440 450 475 495 k|420 422 435 460 470 G|427 420 428 445 460 v|434 420 426 452 458 G|441 410 418 450 455 p|447 398 412 440 450 b|454 395 402 420 425 k|461 398 403 410 415 r|468 400 405 440 445 y|474 430 440 475 485 b|481 455 465 485 492 b|488 470 475 490 495 b|495 460 465 480 488 k|502 450 458 475 480 b|509 455 460 475 480 o|515 405 440 470 478 G|522 400 410 450 460 k|529 340 380 420 428 p|536 345 360 400 412 R|543 340 350 390 400 R|550 340 350 370 380 r|556 237 345 430 475 y|563 318 325 440 505 b|570 283 310 490 520 y|577 420 430 500 518 G|584 380 420 470 500 b|590 365 380 430 440 b|597 340 360 395 405 b|603 325 350 390 395 k|610 350 360 385 395 y|617 380 388 398 408 y"],
    [B, "5 385 390 405 410 y|12 390 400 425 440 m|18 405 425 455 460 r|23 440 455 500 518 p|30 470 480 505 515 g|37 480 484 494 500 k|44 480 485 500 505 k|50 478 488 505 535 p|57 460 465 505 515 b|63 375 380 492 495 c|70 340 378 410 425 n|77 375 382 410 415 m|83 370 380 400 430 n|89 305 338 375 410 y|96 330 340 375 412 y|103 325 345 380 400 G|110 270 300 360 375 d|117 200 245 320 330 R|124 210 240 262 270 r|131 175 210 240 260 d|138 172 178 210 220 r|147 165 178 190 200 R|154 175 180 190 198 k|161 172 178 188 195 r|168 148 160 185 195 d|175 130 140 165 175 R|182 125 132 150 160 r|189 135 140 155 165 R|195 140 148 165 172 k|201 150 158 180 185 y|207 165 170 205 215 v|213 145 158 185 195 b|219 65 150 185 200 y|226 150 160 190 205 b|233 92 130 165 195 k|240 125 135 180 190 v|246 128 130 190 200 y|252 160 165 308 315 m|259 300 308 380 440 m|266 230 240 380 395 n|272 200 210 275 285 b|278 170 185 240 250 b|285 165 185 205 215 b|292 160 185 200 215 t|298 185 190 285 290 r|305 250 280 290 318 R|312 265 280 290 300 k|318 275 282 335 345 m|325 318 325 368 375 p|332 345 355 368 375 k|338 350 358 370 378 G|345 352 358 375 380 g|352 365 372 390 398 k|358 370 378 398 405 G|364 375 385 408 415 p|370 380 400 425 432 o|376 395 425 540 636 g|381 418 430 540 568 g|390 405 425 490 500 p|397 445 460 545 552 d|403 395 420 525 556 c|410 370 395 450 460 c|416 335 350 400 410 b|422 262 315 370 430 n|429 290 300 360 370 v|436 285 318 330 345 n|442 280 292 318 325 b|449 240 250 295 300 G|456 235 242 262 270 G|469 255 265 300 308 y|476 270 280 300 318 b|482 240 255 285 295 b|488 230 238 262 285 b|495 205 212 230 240 k|502 208 215 232 240 r|508 210 216 228 234 r|515 210 225 240 248 k|521 225 235 260 270 y|528 238 245 332 340 r|534 290 295 340 402 R|541 275 320 345 375 v|548 290 300 320 325 G|555 290 312 330 350 k|562 290 305 318 325 v|568 288 300 325 330 b|574 295 310 325 345 k|580 300 312 330 350 r|588 310 318 330 358 R|595 310 320 332 340 p|602 312 320 330 335 r|610 318 326 332 338 R"],
    [C, "17 315 322 334 340 r|24 315 318 335 345 b|31 312 315 358 365 y|38 305 315 345 368 v|45 308 318 335 345 y|52 318 322 330 334 k|59 320 325 332 336 G|66 318 324 333 338 m|73 325 330 345 350 m|79 338 345 412 415 p|86 370 408 618 622 g|93 405 420 610 658 n|99 405 415 480 520 m|106 395 415 440 490 G|112 395 400 430 460 d|119 400 405 430 435 G|124 363 405 440 448 m|131 400 440 450 460 d|137 420 432 455 490 o|144 435 440 480 485 v|150 450 460 488 495 b|157 470 475 520 530 p|164 480 490 510 515 c|171 480 495 515 520 c|178 490 500 512 518 c|185 480 488 510 520 v|192 478 485 505 510 b|199 470 475 500 505 o|206 470 475 490 500 o|213 475 480 500 505 c|219 480 488 510 518 o|226 490 500 530 545 r|233 480 510 540 550 r|240 485 540 725 728 p|246 590 615 650 708 g|252 600 620 660 700 G|260 575 635 645 705 g|267 500 500 630 638 n|273 460 470 545 550 n|280 460 465 495 500 m|287 475 480 535 595 n|294 430 440 485 495 b|301 405 410 470 490 b|307 385 400 430 475 b|313 378 405 485 495 y|320 395 410 470 480 b|327 405 415 440 460 b|334 405 420 440 445 b|341 400 415 430 440 v|350 345 375 415 425 d|356 330 340 380 390 R|363 330 342 352 370 r|370 340 345 352 358 k|377 340 345 355 362 y|384 345 352 365 372 y|391 350 360 400 405 y|398 245 345 402 405 r|405 320 345 375 380 G|411 345 350 385 395 k|418 335 345 380 385 p|425 315 325 350 370 R|431 265 310 325 350 r|437 195 230 318 345 d|444 215 225 325 350 r|451 295 300 365 370 y|457 330 345 375 385 b|463 315 325 350 360 v|469 235 250 320 330 d|476 208 240 250 262 k|482 230 238 252 258 r|489 235 243 252 256 r|496 240 245 265 272 y|503 225 235 262 275 G|509 212 235 250 285 R|516 230 240 252 265 k|523 220 235 245 250 r|529 222 228 245 255 r|536 225 232 248 255 k|542 232 240 250 262 v|549 240 245 305 310 y|555 255 260 310 325 v|562 275 285 340 350 r|569 285 330 360 405 m|575 340 360 470 480 p|582 345 370 505 510 p|588 475 500 580 665 g|594 568 600 725 740 d|600 630 660 740 775 G|607 670 690 750 825 g|613 690 720 795 800 d|619 720 745 795 800 g|626 705 725 765 770 g|632 712 718 748 755 k|638 710 715 735 745 k|645 705 710 728 752 c"]
];

candles.forEach(function (block) {
    block[1].split("|").forEach(function (row) {
        var v = row.split(" ");
        var p = points(v[0] + "," + v[1] + " " + v[0] + "," + v[2] + " " + v[0] + "," + v[3] + " " + v[0] + "," + v[4], block[0]);
        line([p[0], p[3]], wicks[v[5]], 1.3);
        add("rect", {
            x: p[1][0] - 1.2, y: p[1][1], width: 2.4, height: p[2][1] - p[1][1],
            fill: colors[v[5]], stroke: wicks[v[5]], "stroke-width": 0.2
        });
    });
});

averages.forEach(function (a) {
    line(points(a[3], a[0]), a[1], 2);
    line(points(a[4], a[0]), "#b02020", 1.1, "1.5 2");
});
slow.forEach(function (s) {
    line(points(s[2], s[0]), slowColors[s[1]], 2, "3 3");
});

// open price ticks
points("35,265 115,377 175,445 218,668 307,560 343,613 588,310", A)
    .concat(points("75,328 152,165 302,331 355,425 405,327 434,252", B))
    .concat(points("62,408 218,540 453,253 478,267 532,301 557,455 584,725", C))
    .forEach(function (p) {
        line([[p[0] - 1.5, p[1]], [p[0] + 1.5, p[1]]], "#111", 1);
    });
```
